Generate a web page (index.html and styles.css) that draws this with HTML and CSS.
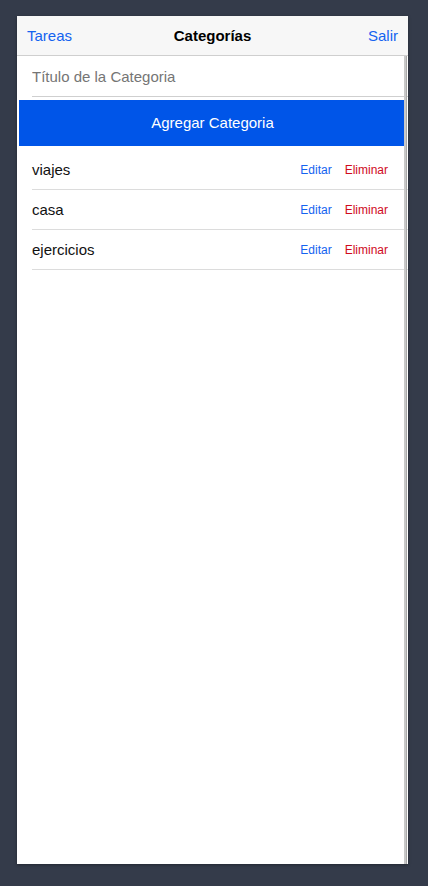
FILE: index.html
```html
<!DOCTYPE html>
<html lang="es">
<head>
<meta charset="utf-8">
<title>Categorías</title>
<link rel="stylesheet" href="styles.css">
</head>
<body>
<div class="phone">
  <header class="navbar">
    <a class="nav-link">Tareas</a>
    <h1 class="nav-title">Categorías</h1>
    <a class="nav-link nav-right">Salir</a>
  </header>
  <main class="content">
    <div class="field">
      <input class="field-input" type="text" placeholder="Título de la Categoria">
    </div>
    <button class="add-btn">Agregar Categoria</button>
    <ul class="list">
      <li class="row"><span class="row-name">viajes</span><span class="row-actions"><a class="edit">Editar</a><a class="delete">Eliminar</a></span></li>
      <li class="row"><span class="row-name">casa</span><span class="row-actions"><a class="edit">Editar</a><a class="delete">Eliminar</a></span></li>
      <li class="row"><span class="row-name">ejercicios</span><span class="row-actions"><a class="edit">Editar</a><a class="delete">Eliminar</a></span></li>
    </ul>
    <div class="scrollbar"></div>
  </main>
</div>
</body>
</html>
```
FILE: styles.css
```css
* { box-sizing: border-box; }
html, body { margin: 0; padding: 0; }
body {
  background: #343b4a;
  font-family: "Liberation Sans", Arial, sans-serif;
  padding: 16px 0 0 17px;
  height: 886px;
  overflow: hidden;
}
.phone {
  width: 391px;
  height: 848px;
  background: #fff;
  display: flex;
  flex-direction: column;
  box-shadow: 0 1px 3px rgba(0,0,0,0.35);
}
.navbar {
  height: 40px;
  flex: none;
  background: #f7f7f7;
  border-bottom: 1px solid #cfcfcf;
  display: grid;
  grid-template-columns: 1fr auto 1fr;
  align-items: center;
  padding: 0 10px 0 10px;
}
.nav-link {
  color: #1463f0;
  font-size: 15px;
}
.nav-right { justify-self: end; }
.nav-title {
  margin: 0;
  font-size: 15px;
  font-weight: bold;
  color: #000;
}
.content {
  position: relative;
  flex: 1;
}
.field {
  margin-left: 15px;
  height: 41px;
  border-bottom: 1px solid #cfcfcf;
  display: flex;
  align-items: center;
}
.field-input {
  border: 0;
  outline: none;
  padding: 0;
  width: 100%;
  font-family: inherit;
  font-size: 15px;
  color: #333;
  background: transparent;
}
.field-input::placeholder { color: #757575; }
.add-btn {
  display: block;
  margin: 3px 2px 0 2px;
  width: calc(100% - 4px);
  height: 46px;
  padding: 0 0 2px 0;
  border: 0;
  background: #0055e8;
  color: #fff;
  font-family: inherit;
  font-size: 15px;
}
.list {
  list-style: none;
  margin: 4px 0 0 15px;
  padding: 0;
}
.row {
  height: 40px;
  border-bottom: 1px solid #dcdcdc;
  display: flex;
  align-items: center;
  justify-content: space-between;
  padding: 0 20px 0 0;
}
.row-name {
  font-size: 15px;
  color: #111;
}
.row-actions {
  display: flex;
  gap: 13px;
  font-size: 12px;
}
.edit { color: #1463f0; }
.delete { color: #d00a1e; }
.scrollbar {
  position: absolute;
  top: 0;
  right: 1px;
  bottom: 0;
  width: 3px;
  background: #c8c8c8;
  border-right: 1px solid #a8a8a8;
}
```
